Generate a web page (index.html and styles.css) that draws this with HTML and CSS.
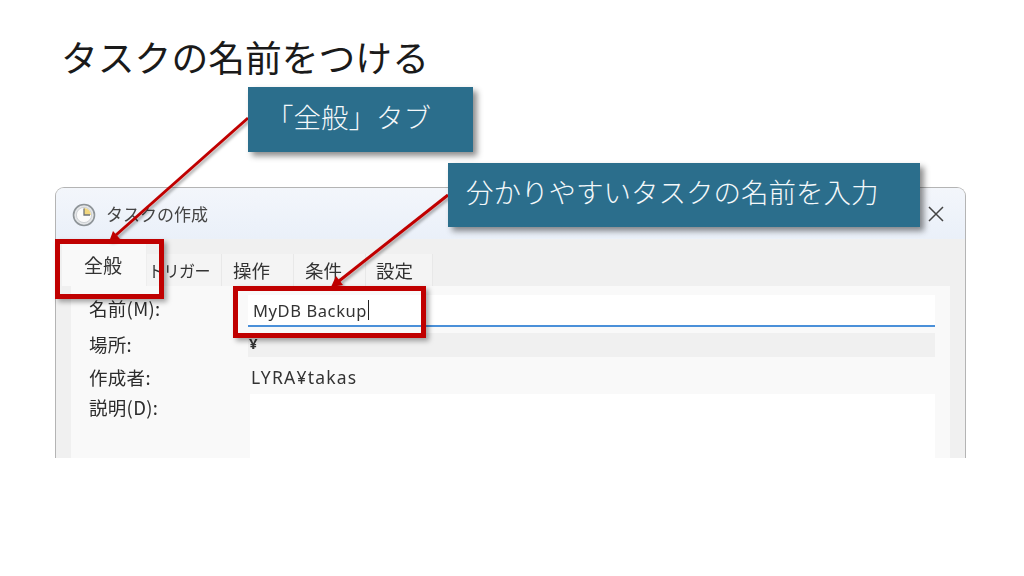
FILE: index.html
```html
<!DOCTYPE html>
<html lang="ja">
<head>
<meta charset="utf-8">
<title>タスクの名前をつける</title>
<link rel="stylesheet" href="styles.css">
</head>
<body>
<div class="slide">
  <h1 class="title">タスクの名前をつける</h1>
  <section class="window">
    <header class="titlebar">
      <svg class="clock" width="24" height="24" viewBox="0 0 24 24">
        <circle cx="12" cy="12" r="10.5" fill="#e4e6e8" stroke="#8e9498" stroke-width="1.6"/>
        <circle cx="12" cy="12" r="7.6" fill="#fbfbfb" stroke="#c4c8cc" stroke-width=".8"/>
        <path d="M12 12V5a7 7 0 0 1 7 7z" fill="#f2d77e"/>
        <path d="M12 5.5V12h6" fill="none" stroke="#6f7478" stroke-width="1.3"/>
      </svg>
      <span class="window-title">タスクの作成</span>
      <svg class="close" width="18" height="18" viewBox="0 0 18 18">
        <path d="M2 2l14 14M16 2L2 16" stroke="#444" stroke-width="1.5" fill="none"/>
      </svg>
    </header>
    <div class="body">
      <nav class="tabs">
        <span class="tab active">全般</span>
        <span class="tab trigger">トリガー</span>
        <span class="tab">操作</span>
        <span class="tab">条件</span>
        <span class="tab last">設定</span>
      </nav>
      <div class="panel">
        <div class="form">
          <label class="label label-low">名前(M):</label>
          <div class="input"><span>MyDB Backup</span><i class="caret"></i></div>
          <label class="label">場所:</label>
          <div class="readonly">¥</div>
          <label class="label">作成者:</label>
          <div class="plain">LYRA¥takas</div>
          <label class="label label-low">説明(D):</label>
          <div class="textarea"></div>
        </div>
      </div>
    </div>
  </section>

  <svg class="arrows" width="1024" height="576" viewBox="0 0 1024 576">
    <defs>
      <filter id="sh" x="-20%" y="-20%" width="150%" height="150%">
        <feDropShadow dx="2" dy="2" stdDeviation="1.5" flood-color="#000" flood-opacity=".35"/>
      </filter>
    </defs>
    <g filter="url(#sh)">
      <path d="M248 118L116 235" stroke="#c00000" stroke-width="3" fill="none"/>
      <path d="M109 242l4-11 7 8z" fill="#c00000"/>
      <path d="M448 195L339 281" stroke="#c00000" stroke-width="3" fill="none"/>
      <path d="M331 287l5-11 7 9z" fill="#c00000"/>
    </g>
  </svg>
  <div class="mark mark-tab"></div>
  <div class="mark mark-name"></div>
  <div class="callout callout-tab">「全般」タブ</div>
  <div class="callout callout-name">分かりやすいタスクの名前を入力</div>
</div>
</body>
</html>
```
FILE: styles.css
```css
* { box-sizing: border-box; }
html, body { margin: 0; padding: 0; background: #fff; }
body { font-family: "Noto Sans CJK JP", "Noto Sans", sans-serif; }
.slide { position: relative; width: 1024px; height: 576px; overflow: hidden; background: #fff; padding: 0 58px 0 55px; }
.title { margin: 0; padding: 34px 0 0 6px; height: 187px; font-size: 36.8px; line-height: 44px; font-weight: 400; color: #1a1a1a; white-space: nowrap; }

.window { height: 271px; border: 1px solid #b4b4b4; border-bottom: 0; border-radius: 9px 9px 0 0; overflow: hidden; display: flex; flex-direction: column; background: #f0f0f0; filter: blur(.4px); }
.titlebar { height: 51px; flex: none; display: flex; align-items: center; padding: 0 20px 0 16px; background: linear-gradient(#f3f6fb, #eaf0f9); color: #444; }
.clock { flex: none; margin-top: 3px; }
.window-title { margin-left: 10px; font-size: 17px; }
.close { margin-left: auto; }

.body { flex: 1; display: flex; flex-direction: column; padding: 0 15px; min-height: 0; }
.tabs { height: 47px; flex: none; display: flex; align-items: flex-end; margin-left: -9px; }
.tab { width: 72px; height: 32px; display: flex; align-items: center; padding-left: 11px; font-size: 18.5px; color: #333; background: #f4f4f4; border-right: 1px solid #e8e8e8; }
.tab.active { width: 85px; height: 44px; background: #f9f9f9; padding-left: 22px; font-size: 19px; border-right: 1px solid #eee; }
.tab.trigger { width: 75px; padding-left: 1px; font-size: 16px; letter-spacing: -.5px; }
.tab.last { width: 67px; padding-left: 10px; }
.panel { flex: 1; background: #f9f9f9; padding: 9px 15px 0 18px; min-height: 0; width: 879px; }
.form { display: grid; grid-template-columns: 159px 1fr; grid-template-rows: 38px 33px 28px 64px; align-items: start; color: #333; }
.label { font-size: 18.5px; line-height: 22px; letter-spacing: .3px; color: #2c2c2c; }
.label-low { padding-top: 2px; }
.input { height: 32px; background: #fff; border-bottom: 2px solid #4a90d9; display: flex; align-items: center; padding: 0 0 0 5px; font-family: "Noto Sans", sans-serif; font-size: 16.5px; letter-spacing: .6px; }
.caret { display: inline-block; width: 1px; height: 20px; background: #222; margin-left: 1px; }
.readonly { height: 24px; background: #f0f0f0; padding: 0 0 0 1px; line-height: 20px; font-family: "Noto Sans", sans-serif; font-size: 15px; font-weight: 700; }
.plain { height: 24px; padding-left: 3px; line-height: 22px; font-family: "Noto Sans", sans-serif; font-size: 17.5px; letter-spacing: 1.2px; }
.form .textarea { background: #fff; margin-left: 2px; height: 66px; }

.arrows { position: absolute; left: 0; top: 0; pointer-events: none; }
.mark { position: absolute; border: 5px solid #c00000; box-shadow: 3px 3px 5px rgba(0,0,0,.35); }
.mark-tab { left: 55px; top: 239px; width: 109px; height: 60px; }
.mark-name { left: 233px; top: 286px; width: 193px; height: 52px; }
.callout { position: absolute; background: #2b6e8c; color: #f4f8fa; font-size: 27.5px; line-height: 1; display: flex; align-items: center; padding-bottom: 6px; box-shadow: 4px 4px 6px rgba(0,0,0,.45); white-space: nowrap; font-weight: 300; }
.callout-tab { left: 248px; top: 87px; width: 225px; height: 65px; padding-left: 18px; }
.callout-name { left: 448px; top: 163px; width: 472px; height: 64px; padding-left: 18px; }
```
